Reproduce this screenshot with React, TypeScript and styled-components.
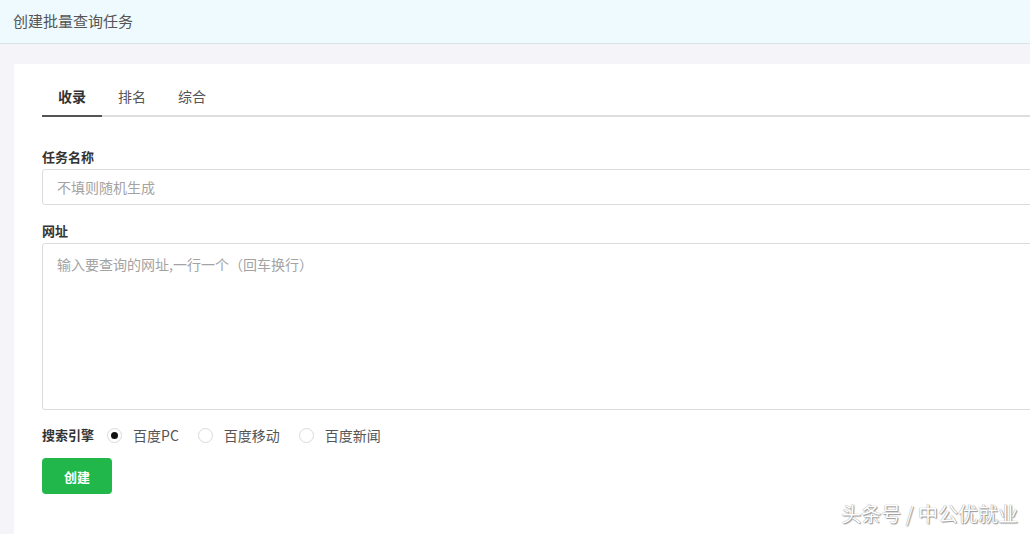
import React, { useState } from "react";
import styled, { createGlobalStyle } from "styled-components";

const GlobalStyle = createGlobalStyle`
  html, body {
    margin: 0;
    padding: 0;
    overflow: hidden;
    background: #f5f4f9;
    font-family: "Noto Sans CJK SC", "Noto Sans", "Liberation Sans", sans-serif;
  }
  * {
    box-sizing: border-box;
  }
`;

const engines = ["百度PC", "百度移动", "百度新闻"];
const tabs = ["收录", "排名", "综合"];

export default function App() {
  const [tab, setTab] = useState(0);
  const [engine, setEngine] = useState(0);

  return (
    <Page>
      <GlobalStyle />
      <Header>创建批量查询任务</Header>
      <Main>
        <Card>
          <TabBar>
            {tabs.map((t, i) => (
              <Tab key={t} $active={i === tab} onClick={() => setTab(i)}>
                {t}
              </Tab>
            ))}
          </TabBar>

          <Field>
            <Label>任务名称</Label>
            <Input placeholder="不填则随机生成" />
          </Field>

          <Field>
            <Label>网址</Label>
            <TextArea placeholder="输入要查询的网址,一行一个（回车换行）" />
          </Field>

          <RadioRow>
            <Label>搜索引擎</Label>
            {engines.map((e, i) => (
              <RadioOption key={e} onClick={() => setEngine(i)}>
                <RadioDot $checked={i === engine} />
                {e}
              </RadioOption>
            ))}
          </RadioRow>

          <CreateButton>创建</CreateButton>
        </Card>
      </Main>
      <Watermark>头条号 / 中公优就业</Watermark>
    </Page>
  );
}

const Page = styled.div`
  position: relative;
  width: 1030px;
  height: 534px;
  overflow: hidden;
  background: #f5f4f9;
`;

const Header = styled.header`
  height: 44px;
  padding: 0 13px 3px;
  display: flex;
  align-items: center;
  background: #eefafd;
  border-bottom: 1px solid #dce3e6;
  color: #555;
  font-size: 15px;
`;

const Main = styled.main`
  padding: 20px 0 0 14px;
  height: calc(100% - 44px);
`;

const Card = styled.section`
  width: 1100px;
  height: 100%;
  background: #fff;
  padding: 13px 0 0 28px;
`;

const TabBar = styled.nav`
  display: flex;
  border-bottom: 2px solid #dedede;
`;

const Tab = styled.div<{ $active: boolean }>`
  width: 60px;
  height: 40px;
  line-height: 38px;
  text-align: center;
  font-size: 14px;
  cursor: pointer;
  color: ${(p) => (p.$active ? "#333" : "#555")};
  font-weight: ${(p) => (p.$active ? 600 : 400)};
  margin-bottom: -2px;
  border-bottom: 2px solid ${(p) => (p.$active ? "#555" : "transparent")};
`;

const Field = styled.div`
  display: flex;
  flex-direction: column;
  margin-top: 30px;
  & + & {
    margin-top: 16px;
  }
`;

const Label = styled.label`
  font-size: 13px;
  font-weight: 700;
  color: #333;
  line-height: 20px;
  margin-bottom: 2px;
`;

const Input = styled.input`
  height: 36px;
  width: 100%;
  border: 1px solid #dcdcdc;
  border-radius: 3px;
  padding: 0 14px;
  font-size: 14px;
  font-family: inherit;
  outline: none;
  &::placeholder {
    color: #a3a3a3;
  }
`;

const TextArea = styled.textarea`
  height: 167px;
  width: 100%;
  border: 1px solid #dcdcdc;
  border-radius: 3px;
  padding: 10px 14px;
  font-size: 14px;
  line-height: 20px;
  font-family: inherit;
  text-spacing-trim: space-all;
  resize: none;
  outline: none;
  &::placeholder {
    color: #a3a3a3;
  }
`;

const RadioRow = styled.div`
  display: flex;
  align-items: center;
  height: 20px;
  margin-top: 15px;
  gap: 19px;
  & > label {
    margin: 0 -6px 0 0;
  }
`;

const RadioOption = styled.div`
  display: flex;
  align-items: center;
  gap: 11px;
  font-size: 14px;
  color: #555;
  cursor: pointer;
`;

const RadioDot = styled.span<{ $checked: boolean }>`
  width: 15px;
  height: 15px;
  border-radius: 50%;
  border: 1px solid #dadada;
  display: flex;
  align-items: center;
  justify-content: center;
  &::after {
    content: "";
    width: 7px;
    height: 7px;
    border-radius: 50%;
    background: ${(p) => (p.$checked ? "#111" : "transparent")};
  }
`;

const CreateButton = styled.button`
  margin-top: 13px;
  width: 70px;
  height: 36px;
  border: none;
  border-radius: 4px;
  background: #21b74a;
  color: #fff;
  font-size: 13px;
  font-weight: 700;
  font-family: inherit;
  cursor: pointer;
`;

const Watermark = styled.div`
  position: absolute;
  right: 12px;
  bottom: 6px;
  font-size: 20px;
  color: #fff;
  text-shadow: 0 0 1px #777, 1px 1px 1px #999;
`;
